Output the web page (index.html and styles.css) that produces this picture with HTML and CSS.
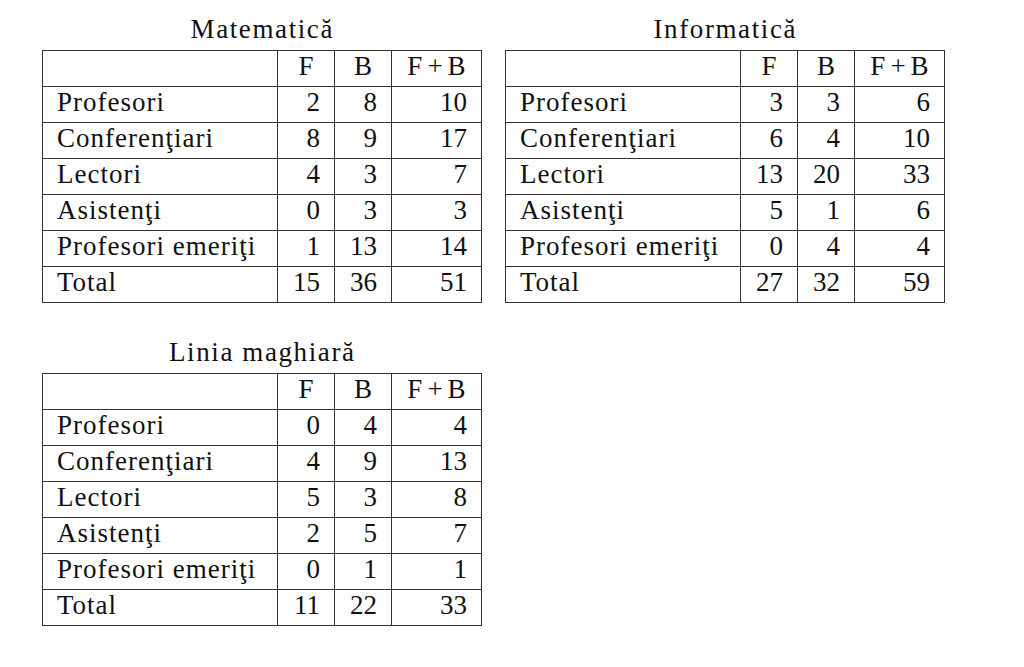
FILE: index.html
```html
<!DOCTYPE html>
<html lang="ro">
<head>
<meta charset="utf-8">
<title>Tabele</title>
<link rel="stylesheet" href="styles.css">
</head>
<body>
<div class="grid">
  <section class="block">
    <div class="caption">Matematică</div>
    <table class="stats">
      <colgroup><col class="c-label"><col class="c-num"><col class="c-num"><col class="c-sum"></colgroup>
      <tr><th></th><th>F</th><th>B</th><th class="fb">F+B</th></tr>
      <tr><td class="lbl">Profesori</td><td>2</td><td>8</td><td>10</td></tr>
      <tr><td class="lbl">Conferenţiari</td><td>8</td><td>9</td><td>17</td></tr>
      <tr><td class="lbl">Lectori</td><td>4</td><td>3</td><td>7</td></tr>
      <tr><td class="lbl">Asistenţi</td><td>0</td><td>3</td><td>3</td></tr>
      <tr><td class="lbl">Profesori emeriţi</td><td>1</td><td>13</td><td>14</td></tr>
      <tr><td class="lbl">Total</td><td>15</td><td>36</td><td>51</td></tr>
    </table>
  </section>
  <section class="block">
    <div class="caption">Informatică</div>
    <table class="stats">
      <colgroup><col class="c-label"><col class="c-num"><col class="c-num"><col class="c-sum"></colgroup>
      <tr><th></th><th>F</th><th>B</th><th class="fb">F+B</th></tr>
      <tr><td class="lbl">Profesori</td><td>3</td><td>3</td><td>6</td></tr>
      <tr><td class="lbl">Conferenţiari</td><td>6</td><td>4</td><td>10</td></tr>
      <tr><td class="lbl">Lectori</td><td>13</td><td>20</td><td>33</td></tr>
      <tr><td class="lbl">Asistenţi</td><td>5</td><td>1</td><td>6</td></tr>
      <tr><td class="lbl">Profesori emeriţi</td><td>0</td><td>4</td><td>4</td></tr>
      <tr><td class="lbl">Total</td><td>27</td><td>32</td><td>59</td></tr>
    </table>
  </section>
  <section class="block">
    <div class="caption">Linia maghiară</div>
    <table class="stats">
      <colgroup><col class="c-label"><col class="c-num"><col class="c-num"><col class="c-sum"></colgroup>
      <tr><th></th><th>F</th><th>B</th><th class="fb">F+B</th></tr>
      <tr><td class="lbl">Profesori</td><td>0</td><td>4</td><td>4</td></tr>
      <tr><td class="lbl">Conferenţiari</td><td>4</td><td>9</td><td>13</td></tr>
      <tr><td class="lbl">Lectori</td><td>5</td><td>3</td><td>8</td></tr>
      <tr><td class="lbl">Asistenţi</td><td>2</td><td>5</td><td>7</td></tr>
      <tr><td class="lbl">Profesori emeriţi</td><td>0</td><td>1</td><td>1</td></tr>
      <tr><td class="lbl">Total</td><td>11</td><td>22</td><td>33</td></tr>
    </table>
  </section>
</div>
</body>
</html>
```
FILE: styles.css
```css
html, body {
  margin: 0;
  padding: 0;
  background: #ffffff;
}

body {
  font-family: "Liberation Serif", "Times New Roman", serif;
  color: #111111;
}

.grid {
  display: grid;
  grid-template-columns: 439px 439px;
  column-gap: 24px;
  row-gap: 34px;
  padding: 14px 0 0 42px;
  align-items: start;
}

.block {
  display: flex;
  flex-direction: column;
}

.caption {
  font-size: 27px;
  line-height: 30px;
  letter-spacing: 1.6px;
  text-indent: 1.6px;
  text-align: center;
  margin-bottom: 6px;
}

.stats {
  border-collapse: collapse;
  table-layout: fixed;
  width: 439px;
  font-size: 27px;
}

.c-label { width: 235px; }
.c-num { width: 57px; }
.c-sum { width: 90px; }

.stats th,
.stats td {
  border: 1px solid #333333;
  height: 30px;
  line-height: 30px;
  padding: 0 14px 5px 14px;
  white-space: nowrap;
  vertical-align: top;
}

.stats th {
  font-weight: normal;
  text-align: center;
  padding-left: 0;
  padding-right: 0;
}

.stats th.fb {
  letter-spacing: 5px;
  text-indent: 5px;
}

.stats td {
  text-align: right;
}

.stats td.lbl {
  text-align: left;
  letter-spacing: 1px;
}
```
